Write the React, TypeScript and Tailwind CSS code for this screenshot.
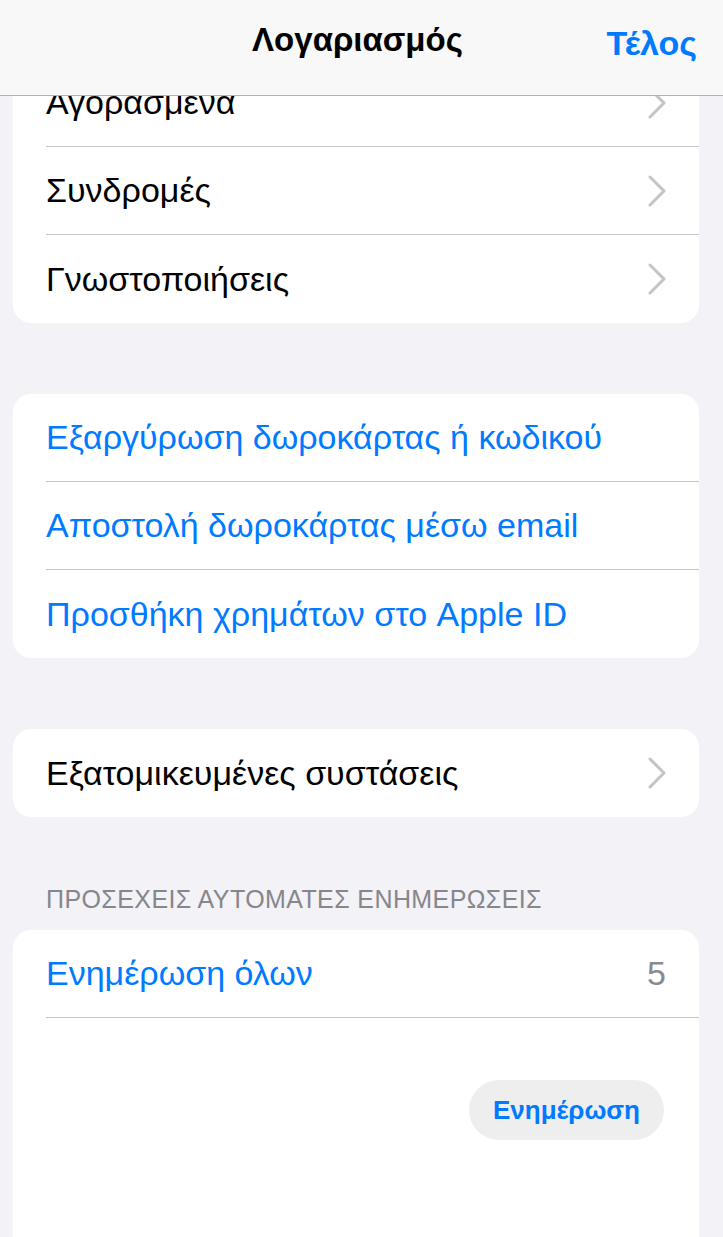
type Row = { label: string; blue?: boolean; chevron?: boolean; value?: string };

const font = { fontFamily: '"Liberation Sans", Arial, sans-serif' };

function Chevron() {
  return (
    <svg width="18" height="32" viewBox="0 0 18 32" className="shrink-0">
      <polyline
        points="2,2 16,16 2,30"
        fill="none"
        stroke="#c4c4c7"
        strokeWidth="3"
        strokeLinecap="round"
        strokeLinejoin="round"
      />
    </svg>
  );
}

function Card({ rows, className = '' }: { rows: Row[]; className?: string }) {
  return (
    <div className={`bg-white rounded-[18px] overflow-hidden ${className}`}>
      {rows.map((row, i) => (
        <div key={i} className="pl-[33px]">
          <div
            className={`h-[88px] flex items-center pr-[33px] ${
              i < rows.length - 1 ? 'border-b border-[#c6c6c8]' : ''
            }`}
          >
            <span className={`flex-1 text-[34px] ${row.blue ? 'text-[#007aff]' : 'text-black'}`}>{row.label}</span>
            {row.value && <span className="text-[34px] text-[#8a8a8e]">{row.value}</span>}
            {row.chevron && <Chevron />}
          </div>
        </div>
      ))}
    </div>
  );
}

export default function App() {
  return (
    <div className="relative h-[1237px] w-[723px] overflow-hidden bg-[#f2f2f7]" style={font}>
      {/* Nav bar overlays scrolled content */}
      <div className="absolute top-0 left-0 right-0 z-10 h-[96px] bg-[#f8f8f8] border-b border-[#b2b2b2] flex items-center justify-center">
        <span className="text-[33px] font-semibold text-black -mt-[16px] -ml-[8px]">Λογαριασμός</span>
        <span className="absolute right-[26px] top-[18px] text-[34px] font-semibold text-[#007aff]">Τέλος</span>
      </div>

      <div className="pl-[13px] pr-[24px] pt-[59px]">
        <Card
          className="rounded-t-none"
          rows={[
            { label: 'Αγορασμένα', chevron: true },
            { label: 'Συνδρομές', chevron: true },
            { label: 'Γνωστοποιήσεις', chevron: true },
          ]}
        />

        <Card
          className="mt-[71px]"
          rows={[
            { label: 'Εξαργύρωση δωροκάρτας ή κωδικού', blue: true },
            { label: 'Αποστολή δωροκάρτας μέσω email', blue: true },
            { label: 'Προσθήκη χρημάτων στο Apple ID', blue: true },
          ]}
        />

        <Card className="mt-[71px]" rows={[{ label: 'Εξατομικευμένες συστάσεις', chevron: true }]} />

        <div className="mt-[67px] pl-[33px] text-[25px] leading-[30px] tracking-[0.4px] text-[#86868b]">
          ΠΡΟΣΕΧΕΙΣ ΑΥΤΟΜΑΤΕΣ ΕΝΗΜΕΡΩΣΕΙΣ
        </div>

        <div className="mt-[16px] bg-white rounded-t-[18px] h-[400px]">
          <div className="pl-[33px]">
            <div className="h-[88px] flex items-center pr-[33px] border-b border-[#c6c6c8]">
              <span className="flex-1 text-[34px] text-[#007aff]">Ενημέρωση όλων</span>
              <span className="text-[34px] text-[#8a8a8e]">5</span>
            </div>
          </div>
          <div className="flex justify-end pr-[35px] pt-[62px]">
            <button className="h-[60px] w-[195px] rounded-full bg-[#eeeeef] text-[26px] font-bold text-[#007aff]">
              Ενημέρωση
            </button>
          </div>
        </div>
      </div>
    </div>
  );
}
